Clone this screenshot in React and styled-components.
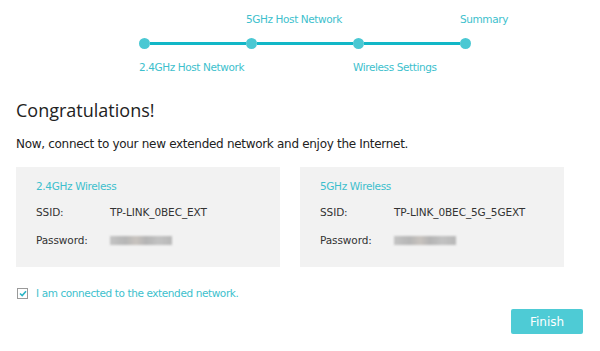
import React from "react";
import styled, { createGlobalStyle } from "styled-components";

const GlobalStyle = createGlobalStyle`
  body {
    margin: 0;
    background: #fff;
    font-family: "DejaVu Sans", Verdana, sans-serif;
    color: #333;
  }
`;

const Page = styled.div`
  width: 600px;
  height: 351px;
  box-sizing: border-box;
  padding: 12px 17px 0 16px;
  overflow: hidden;
`;

const Stepper = styled.div`
  display: flex;
  padding-left: 123px;
`;

const Step = styled.div`
  display: flex;
  flex-direction: column;
  width: ${({ last }) => (last ? "auto" : "107px")};
`;

const StepLabel = styled.div`
  height: 14px;
  font-size: 10.5px;
  line-height: 14px;
  letter-spacing: -0.4px;
  color: #3dbfcd;
  white-space: nowrap;
`;

const DotRow = styled.div`
  display: flex;
  align-items: center;
  height: 11px;
  margin: 12px 0 11px;
`;

const Dot = styled.span`
  flex: none;
  width: 11px;
  height: 11px;
  border-radius: 50%;
  background: #4ac8d3;
`;

const Line = styled.span`
  flex: 1;
  height: 3px;
  background: #12b7c7;
`;

const Title = styled.h1`
  margin: 24px 0 0;
  font-family: "Open Sans", "Noto Sans", sans-serif;
  font-weight: 400;
  font-size: 18px;
  line-height: 24px;
  color: #222;
`;

const Intro = styled.p`
  margin: 14px 0 0;
  font-size: 12px;
  line-height: 16px;
  letter-spacing: -0.3px;
  color: #222;
`;

const Cards = styled.div`
  display: flex;
  gap: 20px;
  margin-top: 15px;
`;

const Card = styled.div`
  width: 264px;
  height: 100px;
  box-sizing: border-box;
  padding: 12px 20px 0;
  background: #f2f2f2;
`;

const CardTitle = styled.div`
  font-size: 10.5px;
  line-height: 14px;
  letter-spacing: -0.35px;
  color: #3dbfcd;
  margin-bottom: 12px;
`;

const Row = styled.div`
  display: flex;
  align-items: center;
  height: 14px;
  margin-bottom: 14px;
  font-size: 10.5px;
  letter-spacing: -0.1px;
  color: #333;
`;

const Key = styled.span`
  width: 74px;
  flex: none;
`;

const Blurred = styled.span`
  display: inline-block;
  width: 62px;
  height: 9px;
  background: linear-gradient(90deg, #c4c4c4, #b6b6b6 25%, #c8c3bf 42%, #b4b4b4 58%, #c2c2c2 78%, #b8b8b8);
  filter: blur(1px);
`;

const CheckRow = styled.label`
  display: flex;
  align-items: center;
  gap: 8px;
  margin-top: 19px;
  padding-left: 1px;
  font-size: 10.5px;
  line-height: 14px;
  letter-spacing: -0.4px;
  color: #3dbfcd;
`;

const Box = styled.span`
  width: 9px;
  height: 9px;
  border: 1px solid #9a9a9a;
  background: #fff;
  display: flex;
  align-items: center;
  justify-content: center;
`;

const Footer = styled.div`
  display: flex;
  justify-content: flex-end;
  margin-top: 9px;
`;

const Button = styled.button`
  width: 72px;
  height: 25px;
  border: none;
  border-radius: 2px;
  background: #4ecbd5;
  color: #fff;
  font-family: "DejaVu Sans", Verdana, sans-serif;
  font-size: 12px;
  padding: 0;
`;

const steps = [
  { name: "2.4GHz Host Network", top: false },
  { name: "5GHz Host Network", top: true },
  { name: "Wireless Settings", top: false },
  { name: "Summary", top: true },
];

const networks = [
  { band: "2.4GHz Wireless", ssid: "TP-LINK_0BEC_EXT" },
  { band: "5GHz Wireless", ssid: "TP-LINK_0BEC_5G_5GEXT" },
];

export default function App() {
  return (
    <>
      <GlobalStyle />
      <Page>
        <Stepper>
          {steps.map((s, i) => {
            const last = i === steps.length - 1;
            return (
              <Step key={s.name} last={last}>
                <StepLabel>{s.top ? s.name : ""}</StepLabel>
                <DotRow>
                  <Dot />
                  {!last && <Line />}
                </DotRow>
                <StepLabel>{s.top ? "" : s.name}</StepLabel>
              </Step>
            );
          })}
        </Stepper>

        <Title>Congratulations!</Title>
        <Intro>Now, connect to your new extended network and enjoy the Internet.</Intro>

        <Cards>
          {networks.map((n) => (
            <Card key={n.band}>
              <CardTitle>{n.band}</CardTitle>
              <Row>
                <Key>SSID:</Key>
                <span>{n.ssid}</span>
              </Row>
              <Row>
                <Key>Password:</Key>
                <Blurred />
              </Row>
            </Card>
          ))}
        </Cards>

        <CheckRow>
          <Box>
            <svg width="8" height="7" viewBox="0 0 8 7">
              <path d="M1 3.5 L3.2 5.5 L7 1.2" fill="none" stroke="#2bb5c6" strokeWidth="1.6" />
            </svg>
          </Box>
          I am connected to the extended network.
        </CheckRow>

        <Footer>
          <Button>Finish</Button>
        </Footer>
      </Page>
    </>
  );
}
